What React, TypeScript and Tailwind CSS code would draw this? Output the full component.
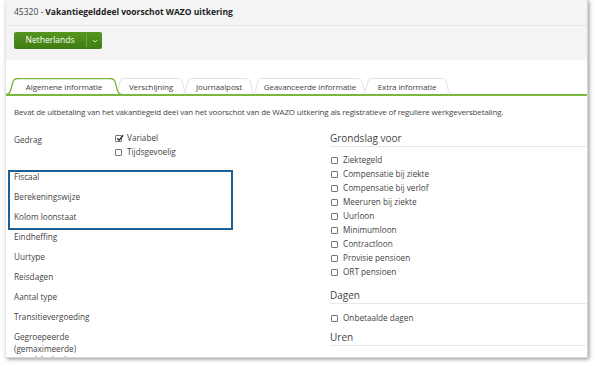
import React from "react";

const font = { fontFamily: '"Open Sans", "Noto Sans", sans-serif' };

function Box({ checked = false }: { checked?: boolean }) {
  return (
    <span className="relative inline-block w-[7px] h-[7px] border border-[#777] rounded-[1px] bg-white mr-[5px] shrink-0">
      {checked && (
        <svg viewBox="0 0 8 8" className="absolute left-[0px] top-[-2px] w-[8px] h-[8px]">
          <path d="M1.2 4.2 L3.2 6.2 L7.2 1.2" fill="none" stroke="#333" strokeWidth="1.4" />
        </svg>
      )}
    </span>
  );
}

function Tab({ label, width, active = false, ml = 0 }: { label: string; width: number; active?: boolean; ml?: number }) {
  const w = width;
  const d = `M0,16.5 C3,16.5 4,15 5,11 L7,3.5 C8,1 9,0.5 12,0.5 L${w - 12},0.5 C${w - 9},0.5 ${w - 8},1 ${w - 7},3.5 L${w - 5},11 C${w - 4},15 ${w - 3},16.5 ${w},16.5`;
  return (
    <div
      className={`relative h-[17px] flex items-center justify-center text-[8px] tracking-[-0.1px] text-[#444] ${active ? "z-10" : ""}`}
      style={{ width: w, marginLeft: ml }}
    >
      <svg className="absolute inset-0" width={w} height={17} viewBox={`0 0 ${w} 17`}>
        <path d={d + (active ? "" : " Z")} fill="#fff" stroke={active ? "#7ab640" : "#e2e2e2"} strokeWidth={active ? 1.3 : 1} />
      </svg>
      <span className="relative pt-[1px]">{label}</span>
    </div>
  );
}

const labels = ["Eindheffing", "Uurtype", "Reisdagen", "Aantal type", "Transitievergoeding"];
const grondslag = [
  "Ziektegeld",
  "Compensatie bij ziekte",
  "Compensatie bij verlof",
  "Meeruren bij ziekte",
  "Uurloon",
  "Minimumloon",
  "Contractloon",
  "Provisie pensioen",
  "ORT pensioen",
];

export default function App() {
  return (
    <div className="w-[597px] h-[366px] bg-white overflow-hidden text-[#444]" style={font}>
      <div className="ml-[6px] w-[582px] h-[358px] bg-white border-r border-b border-[#d6d6d6] shadow-[1px_1px_4px_rgba(0,0,0,0.45)] overflow-hidden flex flex-col">
        {/* title */}
        <div className="h-[26px] bg-[#f4f4f4] border-b border-[#e6e6e6] flex items-center pl-[8px] text-[8.5px] text-[#444] shrink-0">
          <span>45320 - </span>
          <span className="font-bold text-[#222] ml-[2px]">Vakantiegelddeel voorschot WAZO uitkering</span>
        </div>
        {/* toolbar */}
        <div className="h-[34px] bg-[#f4f4f4] pl-[8px] pt-[6px] shrink-0">
          <div className="flex h-[17px] w-[88px] rounded-[2px] bg-gradient-to-b from-[#56961f] to-[#3f7c12] text-white text-[8.5px]">
            <div className="w-[72px] flex items-center justify-center">Netherlands</div>
            <div className="w-px bg-[#6ea83f] my-[2px]" />
            <div className="flex-1 flex items-center justify-center">
              <svg width="6" height="4" viewBox="0 0 6 4">
                <path d="M1 1 L3 3 L5 1" fill="none" stroke="#dfeecf" strokeWidth="0.9" />
              </svg>
            </div>
          </div>
        </div>
        {/* tabs */}
        <div className="mt-[18px] relative shrink-0">
          <div className="flex items-end h-[17px]">
            <Tab label="Algemene informatie" width={116} active />
            <Tab label="Verschijning" width={76} ml={-9} />
            <Tab label="Journaalpost" width={76} ml={-8} />
            <Tab label="Geavanceerde informatie" width={118} ml={-6} />
            <Tab label="Extra informatie" width={92} ml={-8} />
          </div>
          <div className="h-[2px] bg-[#7ab640] mt-[-1px] relative z-20" />
        </div>
        {/* description */}
        <div className="pl-[8px] mt-[10px] text-[8px] tracking-[-0.15px] leading-[12px] text-[#444]">
          Bevat de uitbetaling van het vakantiegeld deel van het voorschot van de WAZO uitkering als registratieve of reguliere werkgeversbetaling.
        </div>
        {/* columns */}
        <div className="flex mt-[13px] text-[8.2px] text-[#444]">
          {/* left */}
          <div className="w-[316px] pl-[8px]">
            <div className="flex h-[36px]">
              <div className="w-[101px] pt-[3px]">Gedrag</div>
              <div className="flex flex-col">
                <div className="flex items-center h-[14px]"><Box checked />Variabel</div>
                <div className="flex items-center h-[14px]"><Box />Tijdsgevoelig</div>
              </div>
            </div>
            <div className="relative">
              <div className="absolute left-[-6px] top-[3px] w-[225px] h-[60px] border-2 border-[#1d5f93]" />
              {["Fiscaal", "Berekeningswijze", "Kolom loonstaat"].map((l) => (
                <div key={l} className="h-[20px] flex items-center">{l}</div>
              ))}
            </div>
            {labels.map((l) => (
              <div key={l} className="h-[20px] flex items-center">{l}</div>
            ))}
            <div className="pt-[4px] leading-[11.5px]">
              Gegroepeerde
              <br />
              (gemaximeerde)
              <br />
              grondslagbedragen
            </div>
          </div>
          {/* right */}
          <div className="flex-1 pl-[8px]">
            <div className="text-[10px] text-[#444] leading-[14px] border-b border-[#e8e8e8] pb-[1px]">Grondslag voor</div>
            <div className="mt-[6px]">
              {grondslag.map((g) => (
                <div key={g} className="flex items-center h-[14px] pl-[1px]"><Box />{g}</div>
              ))}
            </div>
            <div className="mt-[9px] text-[10px] leading-[14px] border-b border-[#e8e8e8] pb-[1px]">Dagen</div>
            <div className="mt-[7px] flex items-center h-[14px] pl-[1px]"><Box />Onbetaalde dagen</div>
            <div className="mt-[5px] text-[10px] leading-[14px] border-b border-[#e8e8e8] pb-[1px]">Uren</div>
          </div>
        </div>
      </div>
    </div>
  );
}
